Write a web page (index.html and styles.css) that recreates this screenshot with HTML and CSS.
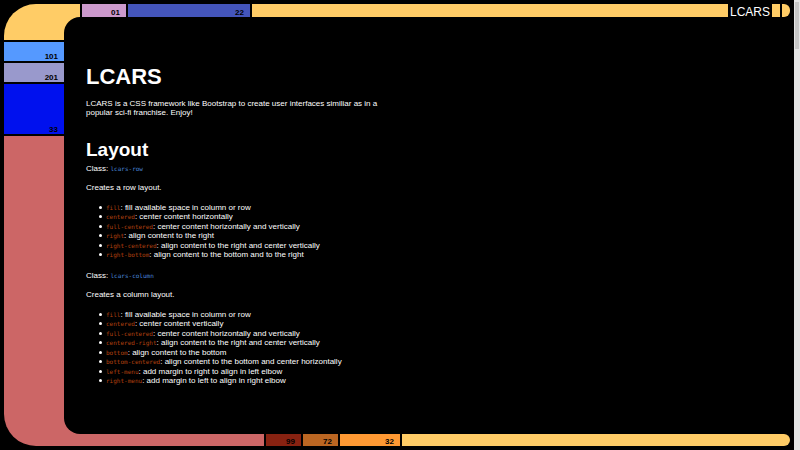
FILE: index.html
```html
<!DOCTYPE html>
<html lang="en">
<head>
<meta charset="utf-8">
<title>LCARS</title>
<link rel="stylesheet" href="styles.css">
</head>
<body>
<div class="frame">
  <nav class="side">
    <div class="elbow elbow-top golden"></div>
    <a class="key key-small sky" href="#layout">101</a>
    <a class="key key-small lilac" href="#layout">201</a>
    <a class="key key-tall blue" href="#layout">33</a>
    <div class="elbow elbow-bottom red"></div>
  </nav>
  <header class="bar bar-top">
    <a class="key key-44 pink" href="#lcars">01</a>
    <a class="key key-122 indigo" href="#lcars">22</a>
    <div class="fill golden"></div>
    <div class="title">LCARS</div>
    <div class="block golden"></div>
    <div class="cap golden"></div>
  </header>
  <main class="content">
    <h1 id="lcars">LCARS</h1>
    <p class="intro">LCARS is a CSS framework like Bootstrap to create user interfaces similiar as in a popular sci-fi franchise. Enjoy!</p>
    <h2 id="layout">Layout</h2>
    <p>Class: <code class="name">lcars-row</code></p>
    <p>Creates a row layout.</p>
    <ul>
      <li><code>fill</code>: fill available space in column or row</li>
      <li><code>centered</code>: center content horizontally</li>
      <li><code>full-centered</code>: center content horizontally and vertically</li>
      <li><code>right</code>: align content to the right</li>
      <li><code>right-centered</code>: align content to the right and center vertically</li>
      <li><code>right-bottom</code>: align content to the bottom and to the right</li>
    </ul>
    <p>Class: <code class="name">lcars-column</code></p>
    <p>Creates a column layout.</p>
    <ul>
      <li><code>fill</code>: fill available space in column or row</li>
      <li><code>centered</code>: center content vertically</li>
      <li><code>full-centered</code>: center content horizontally and vertically</li>
      <li><code>centered-right</code>: align content to the right and center vertically</li>
      <li><code>bottom</code>: align content to the bottom</li>
      <li><code>bottom-centered</code>: align content to the bottom and center horizontally</li>
      <li><code>left-menu</code>: add margin to right to align in left elbow</li>
      <li><code>right-menu</code>: add margin to left to align in right elbow</li>
    </ul>
  </main>
  <footer class="bar bar-bottom">
    <div class="stem red"></div>
    <a class="key key-35 maroon" href="#layout">99</a>
    <a class="key key-35 rust" href="#layout">72</a>
    <a class="key key-60 orange" href="#layout">32</a>
    <div class="fill rounded golden"></div>
  </footer>
</div>
<div class="scroll"><div class="thumb"></div></div>
</body>
</html>
```

FILE: styles.css
```css
* { box-sizing: border-box; }

body {
  margin: 0;
  display: flex;
  min-height: 100vh;
  background: #000;
  color: #fff;
  font-family: "Liberation Sans", Arial, sans-serif;
  font-size: 8px;
  line-height: 9px;
}

.frame {
  flex: 1;
  display: grid;
  grid-template-columns: 60px 16px 1fr;
  grid-template-rows: 13px 1fr 12px;
  padding: 4px;
}

.side {
  grid-column: 1 / 3;
  grid-row: 1 / 4;
  display: flex;
  flex-direction: column;
  gap: 2px;
}

.elbow-top { height: 36px; border-radius: 32px 0 0 0; }
.elbow-bottom { flex: 1; border-radius: 0 0 0 32px; }

.key {
  display: flex;
  justify-content: flex-end;
  align-items: flex-end;
  padding-right: 6px;
  color: #000;
  font-weight: bold;
  text-decoration: none;
}

.side .key { width: 60px; }
.key-small { height: 19px; }
.key-tall { height: 50px; }
.key-35 { width: 35px; }
.key-44 { width: 44px; }
.key-60 { width: 60px; }
.key-122 { width: 122px; }

.bar {
  grid-column: 3;
  display: flex;
  gap: 2px;
}
.bar-top { grid-row: 1; padding-left: 2px; }
.bar-bottom { grid-row: 3; }

.fill { flex: 1; }
.rounded { border-radius: 0 6px 6px 0; }
.stem { width: 184px; }
.block { width: 8px; }
.cap { width: 8px; border-radius: 0 6px 6px 0; }
.title { font-size: 12px; line-height: 16px; }

.content {
  grid-column: 2 / 4;
  grid-row: 2;
  padding: 48px 22px 0;
  background: #000;
  border-radius: 16px 0 0 16px;
}

h1 { margin: 0 0 10px; font-size: 22px; line-height: 24px; }
h2 { margin: 21px 0 2px; font-size: 19px; line-height: 24px; }
p { margin: 0 0 10px; }
.intro { max-width: 300px; }

ul {
  margin: 11px 0 12px;
  padding-left: 20px;
  list-style: none;
}
li:nth-child(even) { margin-bottom: 1px; }
li::before {
  content: "";
  display: inline-block;
  width: 3px;
  height: 3px;
  margin: 0 4px 0 -7px;
  border-radius: 50%;
  background: #fff;
  vertical-align: 1px;
}

code {
  font-family: "DejaVu Sans Mono", monospace;
  font-size: 6px;
  line-height: 6px;
  color: #b3410f;
}
code.name { color: #4a86dc; }

.golden { background: #fc6; }
.sky { background: #59f; }
.lilac { background: #99c; }
.blue { background: #01e; }
.red { background: #c66; }
.pink { background: #c9c; }
.indigo { background: #45b; }
.maroon { background: #821; }
.rust { background: #b62; }
.orange { background: #f93; }

.scroll {
  width: 6px;
  padding: 2px 1px;
  background: #e6e6e6;
}
.thumb { height: 47px; background: #c8c8c8; }
```
